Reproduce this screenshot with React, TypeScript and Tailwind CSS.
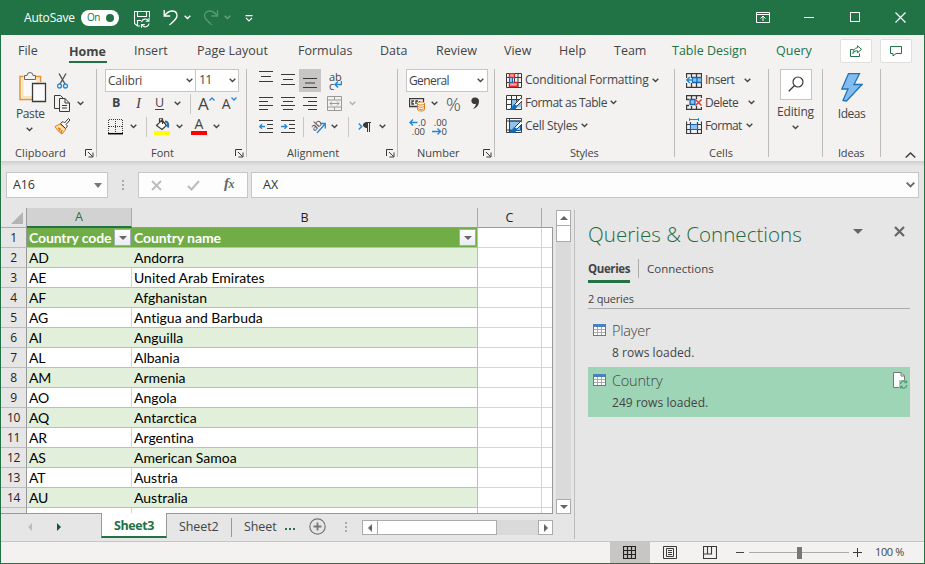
import type { ReactNode } from "react";

const INK = "#3b3a39";
const BLUE = "#2488d8";

function Chevron({ className = "", color = "#444" }: { className?: string; color?: string }) {
  return (
    <svg width="7" height="5" viewBox="0 0 7 5" className={`shrink-0 ${className}`} fill="none" stroke={color} strokeWidth="1.4">
      <path d="M0.7 0.8 3.5 3.5 6.3 0.8" />
    </svg>
  );
}

function Glyph({ w, h, className = "", children }: { w: number; h: number; className?: string; children: ReactNode }) {
  return (
    <svg width={w} height={h} viewBox={`0 0 ${w} ${h}`} className={`shrink-0 ${className}`} fill="none" stroke={INK} strokeWidth="1">
      {children}
    </svg>
  );
}

function Launcher({ className = "" }: { className?: string }) {
  return (
    <Glyph w={9} h={9} className={className}>
      <path d="M0.5 7V0.5H7M3 3l4.5 4.5M8 3.5V8H3.5" />
    </Glyph>
  );
}

function TitleBar() {
  return (
    <header className="flex h-[35px] shrink-0 items-center bg-[#217346] text-white">
      <span className="ml-[24px] w-[57px] whitespace-nowrap text-[12px] tracking-[-0.2px]">AutoSave</span>
      <span className="flex h-[16px] w-[38px] items-center rounded-full bg-white text-[#217346]">
        <span className="ml-[6px] w-[19px] text-[10px] tracking-[-0.5px]">On</span>
        <span className="h-[8px] w-[8px] rounded-full bg-[#217346]" />
      </span>
      <svg className="ml-[15px] mt-[3px] shrink-0" width="16" height="17" viewBox="0 0 16 17" fill="none" stroke="#fff" strokeWidth="1.1">
        <path d="M15.500 6.500V.500H.500v12l3 2.500H6M3.500.500v5h9v-5M3.500 15V9.500H7" />
        <path d="M7.500 11a3.800 3.800 0 0 1 7-1M15 7v3.300h-3.300M15 12.500a3.800 3.800 0 0 1-7 1.500M7.500 16.800V13.600h3.200" />
      </svg>
      <svg className="ml-[13px] shrink-0" width="17" height="17" viewBox="0 0 17 17" fill="none" stroke="#fff" strokeWidth="1.3">
        <path d="M1.200 1v6h6M1.500 6.800C3.500 4 6 2 9 2c3 0 5 2 5 4.700 0 2.600-2 4.300-7.500 9.300" />
      </svg>
      <Chevron color="#fff" className="ml-[4px]" />
      <svg className="ml-[12px] shrink-0 opacity-25" width="17" height="17" viewBox="0 0 17 17" fill="none" stroke="#fff" strokeWidth="1.300">
        <path d="M14.500 1v6h-6M14.200 6.800C12.200 4 10 2 7 2 4 2 1.500 4 1.500 6.700 1.500 9.300 3.500 11 9 16" />
      </svg>
      <Chevron color="#ffffff55" className="ml-[4px]" />
      <svg className="ml-[14px] mt-[1px] shrink-0" width="8" height="7" viewBox="0 0 8 7" fill="none" stroke="#fff" strokeWidth="1.200">
        <path d="M.500.600h7M1 3l3 3 3-3" />
      </svg>
      <svg className="ml-auto mt-[-1px] shrink-0" width="14" height="11" viewBox="0 0 14 11" fill="none" stroke="#fff">
        <path d="M.500.500h13v10H.500zM.500 2.500h13M7 9V4M4.500 6.500 7 4l2.500 2.500" />
      </svg>
      <span className="ml-[34px] h-px w-[10px] bg-white" />
      <span className="ml-[36px] mt-[-1px] h-[10px] w-[10px] border border-white" />
      <svg className="ml-[35px] mr-[19px] mt-[-1px] shrink-0" width="11" height="11" viewBox="0 0 11 11" stroke="#fff" strokeWidth="1.200">
        <path d="M.500.500l10 10M10.500.500l-10 10" />
      </svg>
    </header>
  );
}

function Menu() {
  const tab = "shrink-0 whitespace-nowrap pt-[1px]";
  return (
    <nav className="flex h-[31px] shrink-0 items-center bg-[#f3f2f1] pl-[17px] text-[12.5px] text-[#444]">
      <span className={`${tab} w-[51px]`}>File</span>
      <span className={`${tab} flex h-[31px] w-[65px] flex-col justify-between`}>
        <b className="pt-[6px] leading-[19px]">Home</b>
        <span className="mb-[3px] h-[3px] w-[38px] bg-[#217346]" />
      </span>
      <span className={`${tab} w-[63px]`}>Insert</span>
      <span className={`${tab} w-[101px]`}>Page Layout</span>
      <span className={`${tab} w-[82px]`}>Formulas</span>
      <span className={`${tab} w-[56px]`}>Data</span>
      <span className={`${tab} w-[68px]`}>Review</span>
      <span className={`${tab} w-[55px]`}>View</span>
      <span className={`${tab} w-[55px]`}>Help</span>
      <span className={`${tab} w-[58px]`}>Team</span>
      <span className={`${tab} w-[104px] text-[#217346]`}>Table Design</span>
      <span className={`${tab} w-[64px] text-[#217346]`}>Query</span>
      <span className="flex h-[24px] w-[32px] shrink-0 items-center justify-center rounded-[2px] border border-[#e1dfdd] bg-white">
        <svg width="12" height="12" viewBox="0 0 12 12" fill="none" stroke="#217346">
          <path d="M3.500 4.500h-3v7h9V8.500M7.500.800l4 3.500-4 3.500v-2C5.500 5.500 4 6.500 3 8.500c.200-3 1.500-5.500 4.500-5.800z" />
        </svg>
      </span>
      <span className="ml-[8px] flex h-[24px] w-[32px] shrink-0 items-center justify-center rounded-[2px] border border-[#e1dfdd] bg-white">
        <svg width="12" height="12" viewBox="0 0 12 12" fill="none" stroke="#217346">
          <path d="M.500 1.500h11v7H6l-3 2.500V8.500H.500z" />
        </svg>
      </span>
    </nav>
  );
}

function Group({ w, label, labelLeft, launch, children }: { w: string; label: string; labelLeft: string; launch?: boolean; children: ReactNode }) {
  return (
    <section className={`flex h-[88px] shrink-0 flex-col border-r border-[#bebcba] ${w}`}>
      <div className="h-[69px] shrink-0">{children}</div>
      <div className="mt-[7px] flex h-[16px] shrink-0 items-center">
        <span className={`whitespace-nowrap text-[11px] ${labelLeft}`}>{label}</span>
        {launch && <Launcher className="ml-auto mr-[2px] mt-[1px]" />}
      </div>
    </section>
  );
}

const row = "flex h-[23px] items-center";

function Divider({ className }: { className: string }) {
  return <span className={`h-[20px] w-px shrink-0 bg-[#c8c6c4] ${className}`} />;
}

function ClipboardGroup() {
  return (
    <Group w="w-[96px]" label="Clipboard" labelLeft="ml-[14px] tracking-[0.1px]" launch>
      <div className="flex">
        <div className="flex w-[53px] flex-col">
          <Glyph w={28} h={32} className="ml-[18px] mt-[3px]">
            <path d="M4.500 4.500H1v23h12M17 4.500h4.500V10" stroke="#e8912d" strokeWidth="1.500" />
            <path d="M3 6h16.500v5H13v15H3z" fill="#fbe3b5" stroke="none" />
            <path d="M4.500 6.500h13v4.500H13v13H4.500z" fill="#fafafa" stroke="none" />
            <path d="M5.500 7.500v-4H8a3 3 0 0 1 6 0h2.500v4z" fill="#f3f2f1" stroke="#666" />
            <path d="M13.500 11.500h13v18h-13z" fill="#fafafa" strokeWidth="1.300" />
          </Glyph>
          <span className="ml-[15px] mt-[1px] text-[12px] leading-[18px] tracking-[-0.400px]">Paste</span>
          <Chevron className="ml-[25px] mt-[4px]" />
        </div>
        <div>
          <div className={row}>
            <Glyph w={11} h={16} className="ml-[3px]">
              <path d="M2 .500 8 11M9 .500 3 11" stroke="#555" strokeWidth="1.400" />
              <circle cx="2.500" cy="13" r="2" stroke={BLUE} strokeWidth="1.300" />
              <circle cx="8.500" cy="13" r="2" stroke={BLUE} strokeWidth="1.300" />
            </Glyph>
          </div>
          <div className={row}>
            <Glyph w={17} h={17}>
              <path d="M6 13.500H.500V.500h6l3 3M5.500 3.500H11l4.500 4.500v8.500h-10zM11 3.500V8h4.500M8 10.500h5M8 13h5" />
            </Glyph>
            <Chevron className="ml-[6px]" />
          </div>
          <div className={row}>
            <Glyph w={17} h={17}>
              <path d="M1 8.500 6 6l6 5-4 5C5 14 3 12 1 8.500z" fill="#fce0b6" stroke="#e07b16" />
              <path d="M4 10l2 1-1 2M8 12l-1 3" stroke="#e07b16" strokeWidth="1.500" />
              <path d="M6.500 5.500 9 3.500l1.500 1.500 4-4.500 1.500 1.500-4 4.500L13.500 8l-2 2.500z" fill="#fff" />
            </Glyph>
          </div>
        </div>
      </div>
    </Group>
  );
}

function FontGroup() {
  return (
    <Group w="w-[150px]" label="Font" labelLeft="ml-[54px]" launch>
      <div className={row}>
        <span className="ml-[8px] flex h-[23px] w-[91px] items-center border border-[#c8c6c4] bg-white pl-[2px] text-[12px] tracking-[-0.2px]">
          Calibri<Chevron className="ml-auto mr-[2px]" />
        </span>
        <span className="flex h-[23px] w-[43px] items-center border border-l-0 border-[#c8c6c4] bg-white pl-[3px] text-[12.500px] tracking-[-0.900px]">
          11<Chevron className="ml-auto mr-[2px]" />
        </span>
      </div>
      <div className={row}>
        <b className="ml-[15px] w-[24px] text-[12.500px]">B</b>
        <i className="w-[19px] font-['Liberation_Serif',serif] text-[15px]">I</i>
        <span className="w-[19px] text-[12.500px] underline underline-offset-2">U</span>
        <Chevron />
        <Divider className="ml-[9px]" />
        <span className="ml-[7px] text-[17px] leading-[20px]">A</span>
        <Glyph w={6} h={4} className="mb-[9px]"><path d="M.500 3.500 3 1l2.500 2.500" stroke={BLUE} strokeWidth="1.300" /></Glyph>
        <span className="ml-[7px] text-[14px] leading-[20px]">A</span>
        <Glyph w={6} h={4} className="mb-[9px]"><path d="M.500.500 3 3 5.500.500" stroke={BLUE} strokeWidth="1.300" /></Glyph>
      </div>
      <div className={row}>
        <Glyph w={15} h={16} className="ml-[11px]">
          <path d="M.500 14V.500h14V14M7.500 2v12M1 7.500h13" strokeDasharray="1 1" />
          <path d="M0 14.700h15" stroke="#000" strokeWidth="1.500" />
        </Glyph>
        <Chevron className="ml-[7px]" />
        <Divider className="ml-[9px]" />
        <Glyph w={16} h={17} className="ml-[7px]">
          <path d="M2.500 7.500 8 2l4.500 5.500L8 11.500zM5.500 5V1.500a1.500 1.500 0 0 1 3 0V6" fill="#fff" strokeWidth="1.200" />
          <path d="M11 3.500c3 0 3.500 2.500 3 6" stroke="#176eb5" strokeWidth="2" />
          <path d="M0 13h16v4H0z" fill="#ff0" stroke="none" />
        </Glyph>
        <Chevron className="ml-[6px]" />
        <span className="ml-[8px] flex w-[16px] flex-col items-center">
          <span className="h-[13px] text-[14px] leading-[12px]">A</span>
          <span className="h-[4px] w-[16px] bg-[#f00]" />
        </span>
        <Chevron className="ml-[6px]" />
      </div>
    </Group>
  );
}

function AlignmentGroup() {
  return (
    <Group w="w-[151px]" label="Alignment" labelLeft="ml-[40px]" launch>
      <div className={row}>
        <Glyph w={14} h={11} className="mb-[8px] ml-[12px]"><path d="M0 .500h14M2 5.500h10M0 10.500h14" strokeWidth="1.200" /></Glyph>
        <Glyph w={14} h={11} className="mb-[2px] ml-[8px]"><path d="M0 .500h14M2 5.500h10M0 10.500h14" strokeWidth="1.200" /></Glyph>
        <span className="ml-[4px] flex h-[23px] w-[22px] items-end justify-center bg-[#c8c6c4] pb-[4px]">
          <Glyph w={14} h={10}><path d="M0 .500h14M2 5h10M0 9.500h14" strokeWidth="1.200" /></Glyph>
        </span>
        <span className="ml-[8px] flex w-[16px] flex-col text-[11px] leading-[9px]">
          <span>ab</span>
          <span className="flex items-center">
            c
            <Glyph w={8} h={8}><path d="M7.500 0v3.500H1M4 .500l-3 3 3 3" stroke={BLUE} strokeWidth="1.400" /></Glyph>
          </span>
        </span>
      </div>
      <div className={row}>
        <Glyph w={14} h={14} className="ml-[12px]"><path d="M0 .500h14M0 4.500h9M0 8.500h14M0 12.500h9" strokeWidth="1.200" /></Glyph>
        <Glyph w={14} h={14} className="ml-[8px]"><path d="M0 .500h14M2 4.500h10M0 8.500h14M2 12.500h10" strokeWidth="1.200" /></Glyph>
        <Glyph w={14} h={14} className="ml-[8px]"><path d="M0 .500h14M5 4.500h9M0 8.500h14M5 12.500h9" strokeWidth="1.200" /></Glyph>
        <Glyph w={15} h={15} className="ml-[10px]">
          <path d="M.500.500h14v14H.500zM.500 4h14M.500 11h14M7.500.500V4M7.500 11v3.500M3 7.500h9M5 5.500l-2 2 2 2M10 5.500l2 2-2 2" stroke="#999" />
        </Glyph>
        <Chevron color="#b0b0b0" className="ml-[7px]" />
      </div>
      <div className={row}>
        <Glyph w={14} h={13} className="ml-[12px]">
          <path d="M0 .500h14M8 4.500h6M8 8.500h6M0 12.500h14" strokeWidth="1.200" />
          <path d="M6 6.500H.800M3 4.200.700 6.500 3 8.800" stroke={BLUE} strokeWidth="1.300" />
        </Glyph>
        <Glyph w={14} h={13} className="ml-[8px]">
          <path d="M0 .500h14M8 4.500h6M8 8.500h6M0 12.500h14" strokeWidth="1.200" />
          <path d="M0 6.500h5.500M3.500 4.200 5.800 6.500 3.500 8.800" stroke={BLUE} strokeWidth="1.300" />
        </Glyph>
        <Divider className="ml-[8px]" />
        <span className="ml-[6px] flex w-[18px] items-center">
          <span className="mb-[4px] -rotate-45 text-[10.500px] leading-[10px] tracking-[-0.500px]">ab</span>
          <Glyph w={10} h={12} className="-ml-[5px] mt-[3px]"><path d="M1 11 9 2M4.500 1.500H9.300V6.500" stroke={BLUE} strokeWidth="1.300" /></Glyph>
        </span>
        <Chevron className="ml-[3px]" />
        <Divider className="ml-[10px]" />
        <Glyph w={5} h={7} className="ml-[9px]"><path d="M.700.500 3.700 3.500.700 6.500" stroke={BLUE} strokeWidth="1.400" /></Glyph>
        <Glyph w={8} h={10}>
          <path d="M4 .500C1.500.500.500 1.500.500 3s1 2.500 3.500 2.500z" fill={INK} />
          <path d="M4 .500h4M4.500.500V10M6.500.500V10" />
        </Glyph>
        <Chevron className="ml-[8px]" />
      </div>
    </Group>
  );
}

function NumberGroup() {
  return (
    <Group w="w-[97px]" label="Number" labelLeft="ml-[19px]" launch>
      <div className={row}>
        <span className="ml-[8px] flex h-[23px] w-[82px] items-center border border-[#c8c6c4] bg-white pl-[2px] text-[12px] tracking-[-0.600px]">
          General<Chevron className="ml-auto mr-[3px]" />
        </span>
      </div>
      <div className={row}>
        <Glyph w={16} h={14} className="ml-[11px] mt-[2px]">
          <path d="M8 8.500H.500V.500h14V4M5 3H3v3h2M9 3H7v3M10.500 3v2" strokeWidth="1.300" />
          <path d="M8.500 5.500v6c0 2 7 2 7 0v-6c0-2-7-2-7 0z" fill="#fff" stroke="#e07b16" />
          <path d="M8.500 5.500c0 2 7 2 7 0M8.500 7.700c0 2 7 2 7 0M8.500 9.900c0 2 7 2 7 0" stroke="#e07b16" />
        </Glyph>
        <Chevron className="ml-[6px]" />
        <span className="ml-[8px] w-[17px] text-[18.500px] font-light leading-[20px]">%</span>
        <Glyph w={9} h={13} className="ml-[8px]">
          <path d="M4 .500a3.300 3.300 0 1 0 1 6.300C4.500 9.500 3.500 10.500 1.500 12c4.500-1 6.500-4 6.500-8C8 2 6.500.500 4 .500z" fill={INK} stroke="none" />
        </Glyph>
      </div>
      <div className={row}>
        <span className="ml-[11px] flex w-[16px] flex-col text-[9.500px] leading-[9px]">
          <span className="flex items-center">
            <Glyph w={9} h={7}><path d="M1 3.500h7.500M4 .500l-3 3 3 3" stroke={BLUE} strokeWidth="1.400" /></Glyph>.0
          </span>
          <span className="text-right">.00</span>
        </span>
        <span className="ml-[6px] flex w-[16px] flex-col text-[9.500px] leading-[9px]">
          <span className="text-right">.00</span>
          <span className="flex items-center justify-end">
            <Glyph w={10} h={7}><path d="M0 3.500h8.500M5.500.500l3 3-3 3" stroke={BLUE} strokeWidth="1.400" /></Glyph>0
          </span>
        </span>
      </div>
    </Group>
  );
}

function StylesGroup() {
  const text = "ml-[3px] whitespace-nowrap text-[12px]";
  return (
    <Group w="w-[180px]" label="Styles" labelLeft="ml-[75px] tracking-[-0.2px]">
      <div className="flex h-[22px] items-center">
        <Glyph w={16} h={15} className="ml-[11px]">
          <path d="M.500.500h15v14H.500zM.500 4.500h15M.500 9.500h15M3.500.500v14M8.500.500v14M12 .500v14" />
          <path d="M3.500.500h5v4h-5zM3.500 9.500h8v4h-8z" fill="#f5a3a3" stroke="#e0252b" strokeWidth="1.400" />
          <path d="M3.500 4.500h3v5h-3z" fill="#8cc4ef" stroke="#1565b0" />
        </Glyph>
        <span className={`${text} w-[127px] tracking-[-0.240px]`}>Conditional Formatting</span>
        <Chevron />
      </div>
      <div className={row}>
        <TableStyleGlyph full={false} />
        <span className={`${text} w-[85px] tracking-[-0.500px]`}>Format as Table</span>
        <Chevron />
      </div>
      <div className={row}>
        <TableStyleGlyph full />
        <span className={`${text} w-[56px] tracking-[-0.300px]`}>Cell Styles</span>
        <Chevron />
      </div>
    </Group>
  );
}

function TableStyleGlyph({ full }: { full: boolean }) {
  return (
    <Glyph w={16} h={15} className="ml-[11px]">
      <path d="M.500.500h15v14H.500z" fill="#fafafa" />
      {full ? <path d="M3.500 3h11v9.500h-11z" fill="#8cc4ef" stroke="#1565b0" /> : <path d="M5.500 4.500h10v8h-10z" fill="#8cc4ef" stroke="none" />}
      {full ? <path d="M.500 3h15M3.500.500v14M.500 12h5" /> : <path d="M.500 4.500h15M.500 9.500h5M5.500.500v14M10.500.500v6" />}
      <path d="M15.500 2.500 8.500 9.500l2 2 6-6z" fill="#fff" />
      <path d="M9 9.500c-2 0-2 1.500-2.500 3L4 14c3 1 6.500.500 6.500-3z" fill="#1769b3" stroke="#1769b3" />
    </Glyph>
  );
}

function CellsGroup() {
  const text = "ml-[3px] whitespace-nowrap text-[12px]";
  return (
    <Group w="w-[94px]" label="Cells" labelLeft="ml-[34px]">
      <div className="flex h-[22px] items-center">
        <Glyph w={16} h={15} className="ml-[11px]">
          <path d="M.500 5V.500h15V5M.500 10v4.500h15V10M5.500.500V5M10.500.500V5M5.500 10v4.500M10.500 10v4.500" strokeWidth="1.300" />
          <path d="M6.500 4.500h9v5h-9zM11 4.500v5" fill="#8cc4ef" stroke="#1565b0" strokeWidth="1.300" />
          <path d="M7 7H1M3.800 4 .800 7l3 3" stroke={BLUE} strokeWidth="1.500" />
        </Glyph>
        <span className={`${text} w-[39px] tracking-[-0.500px]`}>Insert</span>
        <Chevron />
      </div>
      <div className={row}>
        <Glyph w={16} h={15} className="ml-[11px]">
          <path d="M.500 4V.500h15V3M.500 10v4.500h15V12M5.500.500V4M10.500.500V4M5.500 11v3.500M10.500 11v3.500M0 4.500h3M0 10.500h3" strokeWidth="1.300" />
          <path d="M4 4.500h5v5H4z" fill="#8cc4ef" stroke="#1565b0" strokeWidth="1.300" />
          <path d="M9.500 4.500l6 6M15.500 4.500l-6 6" stroke="#e03a3a" strokeWidth="1.500" />
        </Glyph>
        <span className={`${text} w-[43px] tracking-[-0.500px]`}>Delete</span>
        <Chevron />
      </div>
      <div className={row}>
        <Glyph w={16} h={16} className="ml-[11px]">
          <path d="M.500 3.500v12h15v-12M.500 6.500h15M.500 11.500h15M4.500 4v11M11.500 4v11" strokeWidth="1.200" />
          <path d="M4.500 6.500h7v5h-7z" fill="#8cc4ef" stroke="#1565b0" />
          <path d="M3.500 0v3M12.500 0v3M3.500 1.500h9" stroke={BLUE} />
        </Glyph>
        <span className={`${text} w-[41px] tracking-[-0.600px]`}>Format</span>
        <Chevron />
      </div>
    </Group>
  );
}

function Ribbon() {
  return (
    <div className="flex h-[95px] shrink-0 bg-[#f3f2f1] pt-[3px] text-[#444]">
      <ClipboardGroup />
      <FontGroup />
      <AlignmentGroup />
      <NumberGroup />
      <StylesGroup />
      <CellsGroup />
      <Group w="w-[54px]" label="" labelLeft="">
        <div className="flex flex-col items-center">
          <span className="flex h-[31px] w-[32px] items-center justify-center border border-[#c8c6c4] bg-white">
            <Glyph w={16} h={16} className="mb-[2px]"><circle cx="10" cy="6" r="5" strokeWidth="1.200" /><path d="M6.500 9.500.800 15.200" strokeWidth="1.300" /></Glyph>
          </span>
          <span className="mt-[3px] text-[12px] leading-[18px] tracking-[-0.2px]">Editing</span>
          <Chevron className="mt-[4px]" />
        </div>
      </Group>
      <Group w="w-[58px]" label="Ideas" labelLeft="ml-[15px] tracking-[-0.2px]">
        <div className="flex flex-col items-center">
          <Glyph w={22} h={29} className="mt-[4px]">
            <path d="M7.500.700h11l-5.500 10.800h8L5.500 28l-3.500-.500 5-11.500H.800z" fill="#83bdee" stroke="#2173b8" strokeWidth="1.300" />
          </Glyph>
          <span className="mt-[3px] text-[12px] leading-[18px] tracking-[-0.500px]">Ideas</span>
        </div>
      </Group>
      <Glyph w={11} h={6} className="ml-[24px] mt-[83px]"><path d="M.700 5.500 5.500 1l4.800 4.500" strokeWidth="1.400" /></Glyph>
    </div>
  );
}

function FormulaBar() {
  const box = "flex h-[26px] shrink-0 items-center border border-[#c6c6c6] bg-[#fdfdfd]";
  return (
    <div className="flex h-[47px] shrink-0 bg-linear-to-b from-[#cfcfce] from-0% to-[#e6e6e6] to-[12%] pl-[5px] pt-[11px] text-[12.500px] text-[#333]">
      <div className={`${box} w-[102px] pl-[6px]`}>
        <span className="tracking-[-0.1px]">A16</span>
        <span className="ml-auto mr-[5px] h-0 w-0 border-x-[4px] border-t-[5px] border-x-transparent border-t-[#777]" />
      </div>
      <Dots className="ml-[14px] mt-[8px]" />
      <div className={`${box} ml-[14px] w-[110px]`}>
        <Glyph w={11} h={11} className="ml-[12px]"><path d="M1 1l9 9M10 1l-9 9" stroke="#bbb" strokeWidth="1.800" /></Glyph>
        <Glyph w={13} h={11} className="ml-[25px]"><path d="M1 6l3.500 3.500L12 1" stroke="#bbb" strokeWidth="2" /></Glyph>
        <span className="mb-[3px] ml-[24px] font-['Liberation_Serif',serif] text-[15px] font-bold italic leading-[14px] tracking-[-0.500px] text-[#666]">
          f<span className="text-[12px]">x</span>
        </span>
      </div>
      <div className={`${box} ml-[3px] w-[668px] pl-[11px]`}>
        AX
        <Glyph w={9} h={6} className="ml-auto mr-[3px]"><path d="M.700.700 4.500 4.500 8.300.700" stroke="#666" strokeWidth="1.800" /></Glyph>
      </div>
    </div>
  );
}

function Dots({ className }: { className: string }) {
  return (
    <span className={`flex w-[2px] shrink-0 flex-col gap-[2px] ${className}`}>
      <span className="h-[2px] bg-[#ababab]" />
      <span className="h-[2px] bg-[#ababab]" />
      <span className="h-[2px] bg-[#ababab]" />
    </span>
  );
}

const countries = [
  ["AD", "Andorra"],
  ["AE", "United Arab Emirates"],
  ["AF", "Afghanistan"],
  ["AG", "Antigua and Barbuda"],
  ["AI", "Anguilla"],
  ["AL", "Albania"],
  ["AM", "Armenia"],
  ["AO", "Angola"],
  ["AQ", "Antarctica"],
  ["AR", "Argentina"],
  ["AS", "American Samoa"],
  ["AT", "Austria"],
  ["AU", "Australia"],
];

function FilterButton() {
  return (
    <span className="mr-px flex h-[17px] w-[17px] shrink-0 items-center justify-center border border-[#a8acb8] bg-linear-to-b from-white to-[#e8ebf3]">
      <span className="h-0 w-0 border-x-[4px] border-t-[4px] border-x-transparent border-t-[#666]" />
    </span>
  );
}

function RowHead({ n }: { n: number }) {
  return (
    <span className="flex w-[26px] shrink-0 items-center justify-center border-b border-r border-b-[#bdbdbd] border-r-[#999] bg-[#e6e6e6] pt-[1px] font-['Open_Sans',sans-serif] text-[12px] tracking-[-0.300px] text-[#222]">
      {n}
    </span>
  );
}

function EmptyCells() {
  return (
    <>
      <span className="w-[64px] shrink-0 border-b border-r border-[#d4d4d4]" />
      <span className="flex-1 border-b border-[#d4d4d4]" />
    </>
  );
}

function Grid() {
  const head = "flex shrink-0 items-center justify-center text-[12.500px]";
  return (
    <div className="flex h-[306px] w-[552px] shrink-0 flex-col">
      <div className="flex h-[20px] shrink-0">
        <span className="flex w-[26px] shrink-0 items-end justify-end border-b border-r border-b-[#ababab] border-r-[#999] pb-[3px] pr-[3px]">
          <svg width="12" height="12"><path d="M12 0v12H0z" fill="#b4b4b4" /></svg>
        </span>
        <span className={`${head} w-[105px] border-b-2 border-r border-b-[#217346] border-r-[#ababab] bg-[#d2d2d2] pt-[1px] text-[#217346]`}>A</span>
        <span className={`${head} w-[346px] border-b border-r border-b-[#999] border-r-[#ababab] pt-[1px] text-[#222]`}>B</span>
        <span className={`${head} w-[64px] border-b border-r border-b-[#999] border-r-[#ababab] pt-[1px] text-[#222]`}>C</span>
        <span className="flex-1 border-b border-b-[#999]" />
      </div>
      <div className="flex min-h-0 flex-1 flex-col overflow-hidden border-b border-r border-[#999] bg-white font-[Lato,'Open_Sans',sans-serif] text-[14px] text-black [font-variant-ligatures:none]">
        <div className="flex h-[20px] shrink-0">
          <RowHead n={1} />
          <span className="flex w-[105px] shrink-0 items-center justify-between border-b border-[#a9d08e] bg-[#70ad47] pl-[2px] font-bold text-white">
            <span className="whitespace-nowrap tracking-[-0.120px]">Country code</span>
            <FilterButton />
          </span>
          <span className="flex w-[346px] shrink-0 items-center justify-between border-b border-r border-[#a9d08e] bg-[#70ad47] pl-[2px] font-bold text-white">
            <span className="tracking-[-0.080px]">Country name</span>
            <FilterButton />
          </span>
          <EmptyCells />
        </div>
        {countries.map(([code, name], i) => (
          <div key={code} className="flex h-[20px] shrink-0">
            <RowHead n={i + 2} />
            <span className={`flex w-[105px] shrink-0 items-center border-b border-b-[#a9d08e] pl-[2px] tracking-[-0.200px] ${i % 2 ? "border-r border-r-[#d4d4d4]" : "bg-[#e2efda]"}`}>{code}</span>
            <span className={`flex w-[346px] shrink-0 items-center border-b border-r border-[#a9d08e] pl-[2px] ${i % 2 ? "" : "bg-[#e2efda]"}`}>{name}</span>
            <EmptyCells />
          </div>
        ))}
        <div className="flex h-[5px] shrink-0">
          <span className="w-[26px] shrink-0 border-r border-[#999] bg-[#e6e6e6]" />
          <span className="w-[105px] shrink-0 border-r border-[#d4d4d4]" />
          <span className="w-[346px] shrink-0 border-r border-[#a9d08e]" />
          <span className="w-[64px] shrink-0 border-r border-[#d4d4d4]" />
        </div>
      </div>
    </div>
  );
}

function VerticalScroll() {
  return (
    <div className="ml-[3px] mt-[2px] flex h-[304px] w-[15px] flex-col bg-[#dadada]">
      <span className="flex h-[16px] items-center justify-center border border-[#ababab] bg-white">
        <span className="h-0 w-0 border-x-[4px] border-b-[4px] border-x-transparent border-b-[#666]" />
      </span>
      <span className="-mt-px h-[17px] border border-[#ababab] bg-white" />
      <span className="mt-auto flex h-[15px] items-center justify-center border border-[#ababab] bg-white">
        <span className="h-0 w-0 border-x-[4px] border-t-[4px] border-x-transparent border-t-[#666]" />
      </span>
    </div>
  );
}

function SheetTabs() {
  return (
    <div className="flex h-[27px] text-[12.500px] text-[#444]">
      <div className="flex h-[25px] w-[100px] shrink-0 items-center">
        <span className="ml-[27px] h-0 w-0 border-y-[4px] border-r-[4px] border-y-transparent border-r-[#bdbdbd]" />
        <span className="ml-[25px] h-0 w-0 border-y-[4px] border-l-[4px] border-y-transparent border-l-[#0e5c2f]" />
      </div>
      <div className="-mt-px flex h-[25px] w-[66px] shrink-0 items-center justify-center border-x border-b-2 border-x-[#999] border-b-[#217346] bg-white pt-[3px] font-bold tracking-[-0.400px] text-[#217346]">
        Sheet3
      </div>
      <span className="ml-[12px] w-[52px] shrink-0 pt-[4px] tracking-[-0.1px]">Sheet2</span>
      <span className="mt-[4px] h-[19px] w-px shrink-0 bg-[#999]" />
      <span className="ml-[12px] w-[41px] shrink-0 pt-[4px] tracking-[-0.1px]">Sheet</span>
      <span className="mt-[14px] flex h-[2px] gap-[2px]">
        <span className="w-[2px] bg-[#217346]" />
        <span className="w-[2px] bg-[#217346]" />
        <span className="w-[2px] bg-[#217346]" />
      </span>
      <Glyph w={17} h={17} className="ml-[14px] mt-[4px]">
        <circle cx="8.500" cy="8.500" r="7.700" stroke="#777" strokeWidth="1.200" />
        <path d="M8.500 4.500v8M4.500 8.500h8" stroke="#777" strokeWidth="1.800" />
      </Glyph>
      <Dots className="ml-[19px] mt-[8px]" />
      <div className="ml-[15px] mt-[6px] flex h-[15px] w-[191px] shrink-0 bg-[#dadada]">
        <span className="flex w-[16px] items-center justify-center border border-[#ababab] bg-white">
          <span className="h-0 w-0 border-y-[4px] border-r-[4px] border-y-transparent border-r-[#666]" />
        </span>
        <span className="-ml-px w-[120px] border border-[#ababab] bg-white" />
        <span className="ml-auto flex w-[15px] items-center justify-center border border-[#ababab] bg-white">
          <span className="h-0 w-0 border-y-[4px] border-l-[4px] border-y-transparent border-l-[#666]" />
        </span>
      </div>
    </div>
  );
}

function TableGlyph() {
  return (
    <svg width="13" height="12" viewBox="0 0 13 12" className="shrink-0">
      <path d="M0 0h13v12H0z" fill="#777" />
      <path d="M0 0h13v3H0z" fill="#4a80bd" />
      <path d="M1 3h11v8H1z" fill="#fff" />
      <path d="M1 5.500h11M1 8.500h11M4.500 3v8M8.500 3v8" stroke="#aaa" />
    </svg>
  );
}

function QueryItem({ name, rows, active }: { name: string; rows: string; active?: boolean }) {
  return (
    <div className={`flex h-[50px] w-[322px] ${active ? "bg-[#9fd5b7]" : ""}`}>
      <div className="ml-[5px] w-[19px] pt-[7px]"><TableGlyph /></div>
      <div className="flex-1">
        <div className="mt-[4px] text-[14.500px] font-light leading-[20px] tracking-[-0.200px]">{name}</div>
        <div className="mt-[2px] text-[12px] leading-[20px] tracking-[0.050px]">{rows}</div>
      </div>
      {active && (
        <svg width="15" height="17" viewBox="0 0 15 17" className="mr-[2px] mt-[5px]" fill="none">
          <path d="M.500.500h7.500l3.500 3.500v11.500H.500z" fill="#fff" stroke="#777" />
          <path d="M8 .500V4h3.500" stroke="#777" />
          <path d="M6 8h9v9H6z" fill="#9fd5b7" />
          <path d="M7.500 12a3.200 3.200 0 0 1 5.500-2M13.500 8.500v2h-2M13.800 13a3.200 3.200 0 0 1-5.600 2M7.500 16.500v-2h2" stroke="#5b9a7b" strokeWidth="1.400" />
        </svg>
      )}
    </div>
  );
}

function QueriesPane() {
  return (
    <aside className="flex h-[331px] flex-1 flex-col pl-[13px] text-[#444]">
      <div className="mt-[15px] flex h-[23px] items-center">
        <h1 className="w-[265px] whitespace-nowrap text-[20.600px] font-light leading-[23px] text-[#1d6b40]">Queries &amp; Connections</h1>
        <span className="mb-[6px] h-0 w-0 border-x-[5px] border-t-[5px] border-x-transparent border-t-[#666]" />
        <Glyph w={11} h={11} className="mb-[7px] ml-[31px]"><path d="M1 1l9 9M10 1l-9 9" stroke="#666" strokeWidth="2.200" /></Glyph>
      </div>
      <div className="mt-[13px] flex h-[24px] text-[11.500px] leading-[19px]">
        <span className="flex w-[42px] flex-col justify-between font-bold tracking-[-0.400px]">
          Queries<span className="h-[3px] bg-[#217346]" />
        </span>
        <span className="ml-[8px] h-[19px] w-px bg-[#ababab]" />
        <span className="ml-[8px]">Connections</span>
      </div>
      <div className="mt-[7px] h-[19px] w-[322px] border-b border-[#ababab] text-[11px] leading-[17px] tracking-[-0.200px]">2 queries</div>
      <div className="mt-[8px]">
        <QueryItem name="Player" rows="8 rows loaded." />
        <QueryItem name="Country" rows="249 rows loaded." active />
      </div>
    </aside>
  );
}

function StatusBar() {
  return (
    <footer className="flex h-[22px] shrink-0 items-center border-t border-[#c6c6c6] bg-[#f3f2f1]">
      <span className="ml-auto flex h-[21px] w-[40px] items-center justify-center bg-[#c8c6c4]">
        <Glyph w={13} h={13} className="mr-[1px]"><path d="M.500.500h12v12H.500zM.500 4.500h12M.500 8.500h12M4.500.500v12M8.500.500v12" stroke="#222" strokeWidth="1.200" /></Glyph>
      </span>
      <Glyph w={14} h={13} className="ml-[13px]"><path d="M.500.500h13v12H.500zM3.500 2.500h7v8h-7zM5 4.500h4M5 6.500h4M5 8.500h4" /></Glyph>
      <Glyph w={14} h={13} className="ml-[26px]"><path d="M.500.500h13v12H.500zM.500 8h8V.500M4.500.500V8" strokeWidth="1.100" /></Glyph>
      <span className="ml-[19px] h-px w-[8px] bg-[#444]" />
      <div className="ml-[5px] flex h-[13px] w-[100px] items-center">
        <span className="h-px w-[48px] bg-[#ababab]" />
        <span className="h-[12px] w-[5px] bg-[#777]" />
        <span className="h-px flex-1 bg-[#ababab]" />
      </div>
      <Glyph w={9} h={9} className="ml-[4px]"><path d="M0 4.500h9M4.500 0v9" /></Glyph>
      <span className="ml-[13px] mr-[12px] w-[37px] whitespace-nowrap text-[11px] tracking-[-0.400px] text-[#444]">100 %</span>
    </footer>
  );
}

export default function App() {
  return (
    <div className="flex h-[564px] w-[925px] flex-col overflow-hidden border border-t-0 border-[#217346] bg-[#e6e6e6] font-['Open_Sans','Noto_Sans',sans-serif]">
      <div className="-ml-px -mr-px flex flex-col"><TitleBar /></div>
      <Menu />
      <Ribbon />
      <FormulaBar />
      <main className="flex h-[333px] shrink-0">
        <div className="w-[573px] shrink-0">
          <div className="flex">
            <Grid />
            <VerticalScroll />
          </div>
          <SheetTabs />
        </div>
        <span className="mt-[2px] h-[329px] w-px bg-[#bdbdbd]" />
        <QueriesPane />
      </main>
      <StatusBar />
    </div>
  );
}
